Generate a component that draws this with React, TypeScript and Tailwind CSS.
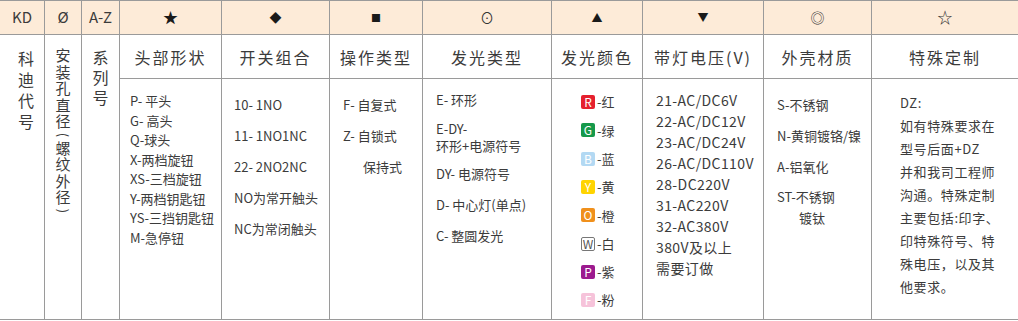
const FONT = { fontFamily: '"Noto Sans CJK SC", "Noto Sans", sans-serif' };

const HEAD = [
  { s: "KD", c: "text-[15px]" },
  { s: "Ø", c: "text-[15px]" },
  { s: "A-Z", c: "text-[15px]" },
  { s: "★", c: "text-[15px] text-[#1a1a1a]" },
  { s: "◆", c: "text-[12px] text-[#1a1a1a]" },
  { s: "■", c: "text-[10px] text-[#1a1a1a]" },
  { s: "⊙", c: "text-[14px] text-[#333]" },
  { s: "▲", c: "text-[11px] text-[#1a1a1a]" },
  { s: "▼", c: "text-[11px] text-[#1a1a1a]" },
  { s: "◎", c: "text-[14px] text-[#333]" },
  { s: "☆", c: "text-[15px] text-[#333]" },
];
const TITLES = ["头部形状", "开关组合", "操作类型", "发光类型", "发光颜色", "带灯电压(V)", "外壳材质", "特殊定制"];

const COLORS = [
  { k: "R", t: "红", cls: "bg-[#e5202e] text-white" },
  { k: "G", t: "绿", cls: "bg-[#16994a] text-white" },
  { k: "B", t: "蓝", cls: "bg-[#b3d9f3] text-white" },
  { k: "Y", t: "黄", cls: "bg-[#ffd400] text-white" },
  { k: "O", t: "橙", cls: "bg-[#f0901c] text-white" },
  { k: "W", t: "白", cls: "bg-white text-[#555] border border-[#777]" },
  { k: "P", t: "紫", cls: "bg-[#9c1a8e] text-white" },
  { k: "F", t: "粉", cls: "bg-[#f6c3da] text-white" },
];

const SPECIAL = [
  "DZ:",
  "如有特殊要求在",
  "型号后面+DZ",
  "并和我司工程师",
  "沟通。特殊定制",
  "主要包括:印字、",
  "印特殊符号、特",
  "殊电压，以及其",
  "他要求。",
];

const cell = "border-r border-b border-[#9a9a9a]";

// vertical label: a 1em wide box so each glyph wraps onto its own line; brackets turned sideways
function Vertical({ parts, pitch, size }: { parts: string[]; pitch: string; size: string }) {
  return (
    <div className={`flex flex-col items-center ${size}`}>
      {parts.map((p, i) =>
        p === "(" || p === ")" ? (
          <span key={i} className="h-[10px] leading-[10px] rotate-90 text-[13px]">
            {p}
          </span>
        ) : (
          <div key={i} className={`w-[1em] break-all text-center ${pitch}`}>
            {p}
          </div>
        )
      )}
    </div>
  );
}

export default function App() {
  return (
    <div className="w-[1018px] h-[321px] bg-white text-[#3b3b3b]" style={FONT}>
      <div className="grid grid-cols-[45px_37px_38px_102px_108px_93px_129px_91px_121px_108px_146px] grid-rows-[34px_44px_241px] border-t border-[#9a9a9a]">
        {HEAD.map((h, i) => (
          <div
            key={h.s}
            className={`${cell} bg-[#fdebd8] flex items-center justify-center ${h.c} ${i === 10 ? "border-r-0" : ""}`}
          >
            {h.s}
          </div>
        ))}

        <div className={`${cell} row-span-2 flex justify-center pl-[8px] pt-[13px]`}>
          <Vertical parts={["科迪代号"]} pitch="leading-[21px]" size="text-[16px]" />
        </div>
        <div className={`${cell} row-span-2 flex justify-center pt-[12px]`}>
          <Vertical parts={["安装孔直径", "(", "螺纹外径", ")"]} pitch="leading-[16.5px]" size="text-[15px]" />
        </div>
        <div className={`${cell} row-span-2 flex justify-center pt-[12px]`}>
          <Vertical parts={["系列号"]} pitch="leading-[20px]" size="text-[16px]" />
        </div>

        {TITLES.map((t, i) => (
          <div
            key={t}
            className={`${cell} flex items-center justify-center text-[16px] tracking-[2px] ${i === 7 ? "border-r-0" : ""}`}
          >
            {t}
          </div>
        ))}

        <div className={`${cell} pl-[10px] pt-[12px] text-[13px] leading-[19.5px]`}>
          <div>P- 平头</div>
          <div>G- 高头</div>
          <div>Q-球头</div>
          <div>X-两档旋钮</div>
          <div>XS-三档旋钮</div>
          <div>Y-两档钥匙钮</div>
          <div>YS-三挡钥匙钮</div>
          <div>M-急停钮</div>
        </div>

        <div className={`${cell} pl-[12px] pt-[10px] text-[13px] leading-[31px]`}>
          <div>10- 1NO</div>
          <div>11- 1NO1NC</div>
          <div>22- 2NO2NC</div>
          <div>NO为常开触头</div>
          <div>NC为常闭触头</div>
        </div>

        <div className={`${cell} pl-[13px] pt-[10px] text-[13px] leading-[31px]`}>
          <div>F- 自复式</div>
          <div>Z- 自锁式</div>
          <div className="pl-[20px]">保持式</div>
        </div>

        <div className={`${cell} pl-[13px] pt-[11px] text-[13px]`}>
          <div className="leading-[20px]">E- 环形</div>
          <div className="mt-[10px] leading-[17px]">E-DY-</div>
          <div className="leading-[17px]">环形+电源符号</div>
          <div className="mt-[10px] leading-[20px]">DY- 电源符号</div>
          <div className="mt-[11px] leading-[20px]">D- 中心灯(单点)</div>
          <div className="mt-[11px] leading-[20px]">C- 整圆发光</div>
        </div>

        <div className={`${cell} pl-[29px] pt-[9px] text-[13px]`}>
          {COLORS.map((c) => (
            <div key={c.k} className="flex items-center h-[28.3px]">
              <span
                className={`w-[14px] h-[14px] rounded-[2px] flex items-center justify-center text-[12px] leading-none ${c.cls}`}
              >
                {c.k}
              </span>
              <span className="ml-[2px]">-{c.t}</span>
            </div>
          ))}
        </div>

        <div className={`${cell} pl-[13px] pt-[11px] text-[14px] leading-[21px] tracking-[0.4px]`}>
          <div>21-AC/DC6V</div>
          <div>22-AC/DC12V</div>
          <div>23-AC/DC24V</div>
          <div>26-AC/DC110V</div>
          <div>28-DC220V</div>
          <div>31-AC220V</div>
          <div>32-AC380V</div>
          <div>380V及以上</div>
          <div>需要订做</div>
        </div>

        <div className={`${cell} pl-[13px] pt-[10px] text-[13px] leading-[31px]`}>
          <div>S-不锈钢</div>
          <div>N-黄铜镀铬/镍</div>
          <div>A-铝氧化</div>
          <div className="leading-[20px] mt-[5px]">ST-不锈钢</div>
          <div className="leading-[22px] pl-[22px]">镀钛</div>
        </div>

        <div className={`${cell} border-r-0 pl-[28px] pt-[12px] text-[13px] leading-[23px] tracking-[0.6px]`}>
          {SPECIAL.map((l) => (
            <div key={l} className="whitespace-nowrap">{l}</div>
          ))}
        </div>
      </div>
    </div>
  );
}
